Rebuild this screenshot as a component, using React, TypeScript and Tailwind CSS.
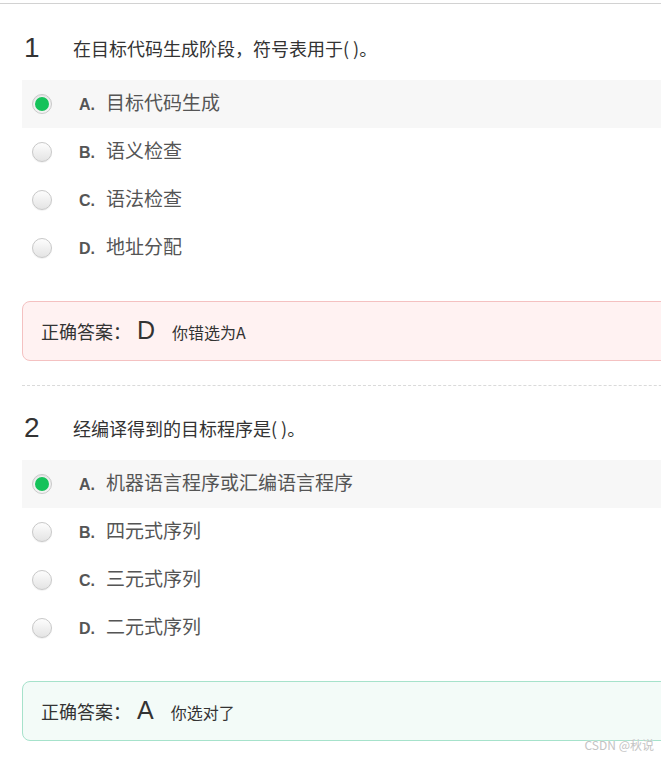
const CJK = "font-['Noto_Sans_CJK_SC','Microsoft_YaHei',sans-serif]";

type Option = { key: string; text: string };

type Question = {
  no: number;
  title: string;
  options: Option[];
  picked: string;
  answer: string;
  note: string;
  correct: boolean;
};

const questions: Question[] = [
  {
    no: 1,
    title: "在目标代码生成阶段，符号表用于( )。",
    options: [
      { key: "A", text: "目标代码生成" },
      { key: "B", text: "语义检查" },
      { key: "C", text: "语法检查" },
      { key: "D", text: "地址分配" },
    ],
    picked: "A",
    answer: "D",
    note: "你错选为A",
    correct: false,
  },
  {
    no: 2,
    title: "经编译得到的目标程序是( )。",
    options: [
      { key: "A", text: "机器语言程序或汇编语言程序" },
      { key: "B", text: "四元式序列" },
      { key: "C", text: "三元式序列" },
      { key: "D", text: "二元式序列" },
    ],
    picked: "A",
    answer: "A",
    note: "你选对了",
    correct: true,
  },
];

function Radio({ checked }: { checked: boolean }) {
  if (checked) {
    return (
      <span className="flex h-5 w-5 shrink-0 items-center justify-center rounded-full border border-[#c9c9c9] bg-[#f2f2f2] shadow-[inset_0_1px_1px_rgba(0,0,0,0.08)]">
        <span className="h-[14px] w-[14px] rounded-full bg-[#15c25a]" />
      </span>
    );
  }
  return (
    <span className="h-5 w-5 shrink-0 rounded-full border border-[#c8c8c8] bg-gradient-to-b from-[#fdfdfd] to-[#e4e4e4] shadow-[0_1px_1px_rgba(0,0,0,0.06)]" />
  );
}

function QuestionBlock({ q, first }: { q: Question; first: boolean }) {
  return (
    <section className={first ? "" : "border-t border-dashed border-[#dadada]"}>
      <div className={`mb-[7px] flex h-[50px] items-center ${first ? "mt-[19px]" : "mt-[17px]"}`}>
        <span className="w-[51px] pl-[2px] font-['Liberation_Sans',Arial,sans-serif] text-[28px] leading-none text-[#333]">
          {q.no}
        </span>
        <span className={`${CJK} text-[18px] leading-none text-[#333]`}>{q.title}</span>
      </div>

      <ul>
        {q.options.map((o) => (
          <li
            key={o.key}
            className={`flex h-12 items-center pl-[10px] ${o.key === q.picked ? "bg-[#f7f7f7]" : ""}`}
          >
            <Radio checked={o.key === q.picked} />
            <span className="ml-[27px] flex items-baseline">
              <span className="w-[27px] font-['Liberation_Sans',Arial,sans-serif] text-[16px] font-bold text-[#555]">
                {o.key}.
              </span>
              <span className={`${CJK} text-[19px] leading-none text-[#555]`}>{o.text}</span>
            </span>
          </li>
        ))}
      </ul>

      <div
        className={`mt-[29px] mb-[24px] flex h-[60px] items-center rounded-lg border pl-[18px] ${
          q.correct ? "border-[#a6e2cb] bg-[#f3fbf8]" : "border-[#f4c1c1] bg-[#fff2f2]"
        }`}
      >
        <span className="flex items-baseline">
          <span className={`${CJK} w-[90px] text-[18px] text-[#333]`}>正确答案：</span>
          <span className="ml-[6px] font-['Liberation_Sans',Arial,sans-serif] text-[25px] leading-none text-[#333]">
            {q.answer}
          </span>
          <span className={`${CJK} ml-[17px] text-[16px] text-[#333]`}>{q.note}</span>
        </span>
      </div>
    </section>
  );
}

export default function App() {
  return (
    <div className="relative h-[759px] w-[661px] overflow-hidden bg-white">
      <div className="mt-[3px] border-t border-[#d2d2d2]" />
      <div className="pl-[22px]">
        <div className="w-[720px]">
          {questions.map((q, i) => (
            <QuestionBlock key={q.no} q={q} first={i === 0} />
          ))}
        </div>
      </div>
      <span
        className={`${CJK} absolute right-[7px] top-[736px] text-[12px] text-[#c4c4c4] [text-shadow:0_0_2px_#fff]`}
      >
        CSDN @秋说
      </span>
    </div>
  );
}
